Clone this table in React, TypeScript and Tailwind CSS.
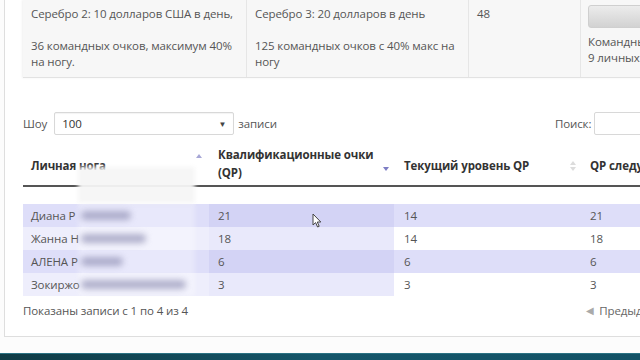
import React from 'react';

interface Row {
  first: string;
  blurW: number;
  qp: string;
  level: string;
  next: string;
}

const rows: Row[] = [
  { first: 'Диана Р', blurW: 50, qp: '21', level: '14', next: '21' },
  { first: 'Жанна Н', blurW: 65, qp: '18', level: '14', next: '18' },
  { first: 'АЛЕНА Р', blurW: 42, qp: '6', level: '6', next: '6' },
  { first: 'Зокиржо', blurW: 105, qp: '3', level: '3', next: '3' },
];

const SortIcon: React.FC<{ dir: 'up' | 'down' | 'both' }> = ({ dir }) => (
  <svg width="8" height="12" viewBox="0 0 8 12" className="shrink-0">
    {(dir === 'up' || dir === 'both') && <polygon points="1,5 7,5 4,1" fill={dir === 'up' ? '#a7a7d6' : '#dcdcdc'} />}
    {(dir === 'down' || dir === 'both') && <polygon points="1,7 7,7 4,11" fill={dir === 'down' ? '#7d7dc4' : '#dcdcdc'} />}
  </svg>
);

const App: React.FC = () => {
  return (
    <div className="w-[640px] h-[360px] overflow-hidden bg-[#fcfcfc] relative font-['Open_Sans',sans-serif] text-[11.5px] tracking-[-0.1px] text-[#555]">
      <div className="ml-[4px] h-[337px] border-l border-b border-[#dedede] bg-white pl-[18px] flex flex-col">
        {/* top plans table */}
        <div className="flex shrink-0 bg-[#f7f7f7] border-b border-[#e2e2e2] h-[78px] w-[700px] leading-[16px] shadow-[-1px_0_2px_rgba(0,0,0,0.06)]">
          <div className="w-[224px] shrink-0 pl-[8px] pr-[4px] pt-[6px] border-r border-[#e6e6e6]">
            <p className="whitespace-nowrap">Серебро 2: 10 долларов США в день,</p>
            <p className="mt-[16px]">36 командных очков, максимум 40% на ногу.</p>
          </div>
          <div className="w-[222px] shrink-0 pl-[8px] pr-[4px] pt-[6px] border-r border-[#e6e6e6]">
            <p>Серебро 3: 20 долларов в день</p>
            <p className="mt-[16px]">125 командных очков с 40% макс на ногу</p>
          </div>
          <div className="w-[112px] shrink-0 px-[8px] pt-[6px] border-r border-[#e6e6e6]">48</div>
          <div className="flex-1 px-[7px] pt-[5px]">
            <div className="h-[23px] w-[120px] rounded-[3px] border border-[#cfcfcf] bg-gradient-to-b from-[#ececec] to-[#d2d2d2]" />
            <p className="mt-[6px] whitespace-nowrap">Командный бонус</p>
            <p className="whitespace-nowrap">9 личных ног</p>
          </div>
        </div>

        {/* length + search */}
        <div className="flex shrink-0 items-center mt-[34px] h-[23px] w-[640px]">
          <span>Шоу</span>
          <div className="ml-[7px] w-[180px] shrink-0 h-[23px] border border-[#d8d8d8] rounded-[2px] flex items-center justify-between px-[7px] text-[#333] shadow-[inset_0_1px_1px_rgba(0,0,0,0.05)]">
            <span>100</span>
            <span className="text-[8px] text-[#444]">▼</span>
          </div>
          <span className="ml-[4px]">записи</span>
          <span className="ml-[278px]">Поиск:</span>
          <div className="ml-[3px] w-[60px] shrink-0 h-[23px] border border-[#d8d8d8] rounded-[2px]" />
        </div>

        {/* data table */}
        <div className="mt-[8px] w-[640px] shrink-0 text-[#555]">
          <div className="flex h-[44px] border-b-2 border-[#555] font-bold text-[#333] leading-[18px]">
            <div className="w-[186px] shrink-0 pl-[8px] pr-[6px] flex items-center justify-between">
              <span className="mt-[3px]">Личная нога</span>
              <span className="-mt-[10px]"><SortIcon dir="up" /></span>
            </div>
            <div className="w-[185px] shrink-0 pl-[9px] pr-[4px] flex items-center justify-between">
              <span className="-mt-[1px] whitespace-nowrap">Квалификационные очки<br />(QP)</span>
              <span className="mt-[4px]"><SortIcon dir="down" /></span>
            </div>
            <div className="w-[187px] shrink-0 pl-[10px] pr-[4px] flex items-center justify-between">
              <span className="mt-[3px]">Текущий уровень QP</span>
              <span className="mt-[3px]"><SortIcon dir="both" /></span>
            </div>
            <div className="flex-1 pl-[9px] flex items-center whitespace-nowrap">
              <span className="mt-[3px]">QP следующего уровня</span>
            </div>
          </div>
          <div className="h-[17px]" />
          {rows.map((r, i) => {
            const odd = i % 2 === 0;
            return (
              <div key={i} className={`flex h-[23px] items-center ${odd ? 'bg-[#dedef9]' : 'bg-white'}`}>
                <div className={`w-[186px] shrink-0 h-full flex items-center pl-[8px] ${odd ? '' : 'bg-[#eeeefc]'}`}>{r.first}</div>
                <div className={`w-[185px] shrink-0 h-full flex items-center pl-[9px] ${odd ? 'bg-[#d3d3f5]' : 'bg-[#e9e9fb]'}`}>{r.qp}</div>
                <div className="w-[187px] shrink-0 h-full flex items-center pl-[10px]">{r.level}</div>
                <div className="flex-1 h-full flex items-center pl-[9px]">{r.next}</div>
              </div>
            );
          })}
        </div>

        {/* footer */}
        <div className="flex shrink-0 items-center mt-[6px] w-[640px]">
          <span>Показаны записи с 1 по 4 из 4</span>
          <span className="ml-auto mr-[-8px] flex items-center gap-[5px] text-[#666] whitespace-nowrap">
            <span className="text-[10px] text-[#aaa]">◀</span>
            Предыдущая
          </span>
        </div>
      </div>

      {/* privacy blur over names */}
      <div className="absolute left-[78px] top-[167px] w-[117px] h-[36px] bg-[#f6f6f6]/95 blur-[2px]" />
      <div className="absolute left-[78px] top-[204px] w-[117px] h-[92px] bg-white/30 blur-[2px]" />
      {rows.map((r, i) => (
        <div
          key={i}
          className="absolute left-[81px] h-[9px] rounded-full bg-[#8c8cb0]/65 blur-[3px]"
          style={{ top: 211 + i * 23, width: r.blurW }}
        />
      ))}

      {/* mouse cursor */}
      <svg className="absolute left-[312px] top-[213px]" width="10" height="15" viewBox="0 0 10 15">
        <path d="M1 1 L1 12 L3.6 9.6 L5.6 14 L7.2 13.3 L5.3 9 L8.8 9 Z" fill="#fff" stroke="#444" strokeWidth="1" strokeLinejoin="round" />
      </svg>

      {/* bottom taskbar strip */}
      <div className="absolute left-0 right-0 bottom-0 h-[7px] bg-gradient-to-r from-[#0f3b45] via-[#15566a] to-[#135266] border-t border-[#2b7283]" />
    </div>
  );
};

export default App;
